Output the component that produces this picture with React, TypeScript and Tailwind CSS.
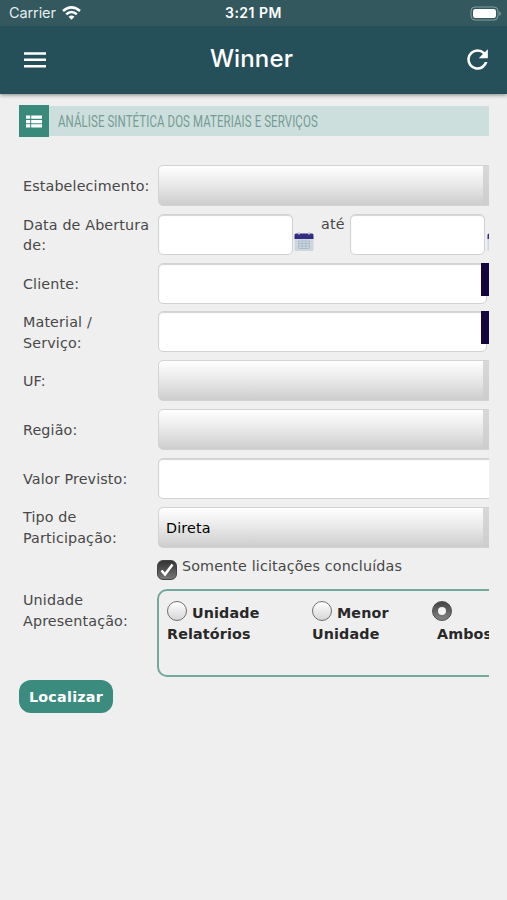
import React from 'react';
import clsx from 'clsx';

interface FieldRowProps {
  label: string;
  children: React.ReactNode;
}

function FieldRow({ label, children }: FieldRowProps) {
  return (
    <div className="flex h-[48.8px] shrink-0">
      <div className="flex h-[42px] w-[139px] shrink-0 items-center whitespace-pre-line pl-1 pt-[1px]">
        {label}
      </div>
      {children}
    </div>
  );
}

function SelectField({ value = '' }: { value?: string }) {
  return (
    <div className="flex h-[41px] w-[340px] shrink-0 rounded-[5px] border border-[#d3d3d3] bg-linear-to-b from-white via-[#e8e8e8] to-[#cdcdcd]">
      <div className="flex w-[324px] items-center pl-[7px] pt-[2px] text-black">{value}</div>
      <div className="grow bg-linear-to-b from-[#d8d8d8] to-[#cdcdcd]" />
    </div>
  );
}

function TextField({ className }: { className?: string }) {
  return (
    <div
      className={clsx(
        'h-[41px] shrink-0 rounded-[5px] border border-[#d2d2d2] bg-white shadow-[inset_0_1px_1px_#d4d4d4]',
        className
      )}
    />
  );
}

function CalendarIcon() {
  return (
    <svg width="20" height="20" viewBox="0 0 20 20" className="mt-[18px] shrink-0">
      <rect x="0.5" y="4" width="19" height="15" rx="1.5" fill="#ccd7df" />
      <path d="M0.5 7V3Q0.5 1.5 2 1.5H18Q19.5 1.5 19.5 3V7Z" fill="#302f80" />
      <path d="M5 0.5V2.6M15 0.5V2.6" stroke="#b9bed6" strokeWidth="2" />
      <path
        d="M4.5 9H15.5M4.5 11.5H15.5M4.5 14H15.5M4.5 16.5H15.5M4.5 9V16.5M8.2 9V16.5M11.8 9V16.5M15.5 9V16.5"
        stroke="#a5b8c5"
        strokeWidth="0.8"
      />
    </svg>
  );
}

// Text input with the lookup button overlapping its right edge
function SearchField() {
  return (
    <div className="relative flex shrink-0">
      <TextField className="w-[329px]" />
      <div className="absolute left-[323px] top-0 flex h-[33px] w-8 items-center justify-center bg-[#140541]">
        <svg width="18" height="18" viewBox="0 0 18 18" fill="none" stroke="#fff" strokeWidth="2">
          <circle cx="7" cy="7" r="5" />
          <path d="M11 11L16 16" />
        </svg>
      </div>
    </div>
  );
}

function Radio({ checked = false }: { checked?: boolean }) {
  return (
    <span
      className={clsx(
        'flex size-5 shrink-0 items-center justify-center rounded-full border-[1.5px]',
        checked
          ? 'border-[#4b4b4b] bg-linear-to-b from-[#444] to-[#858585]'
          : 'border-[#707070] bg-linear-to-b from-white to-[#d6d6d6]'
      )}
    >
      {checked && <span className="size-2 rounded-full bg-[#f3f3f3]" />}
    </span>
  );
}

function StatusBar() {
  return (
    <div className="grid h-[26px] grid-cols-3 items-center bg-[#33595e] pl-[9px] pr-[6px] pt-[1px] text-[14.5px] text-[#e4eeee]">
      <div className="flex items-center gap-[6px]">
        <span className="tracking-[-0.1px]">Carrier</span>
        <svg width="19" height="14" viewBox="0 0 19 14" fill="none" stroke="#fff" strokeWidth="2.5">
          <path d="M1 5Q9.5 -2.2 18 5" />
          <path d="M4.2 8.3Q9.5 3.8 14.8 8.3" />
          <path d="M9.5 13.7L6.5 10.7Q9.5 8.2 12.5 10.7Z" fill="#fff" stroke="none" />
        </svg>
      </div>
      <div className="pr-[3px] text-center text-[14px] font-semibold tracking-[0.5px] text-white">3:21 PM</div>
      <svg width="31" height="15" viewBox="0 0 31 15" className="justify-self-end">
        <rect x="1" y="1" width="27" height="13" rx="4" fill="none" stroke="#879fa1" />
        <rect x="3" y="3" width="23" height="9" rx="2.3" fill="#fff" />
        <path d="M29.3 5V10Q30.8 9 30.8 7.5T29.3 5Z" fill="#879fa1" />
      </svg>
    </div>
  );
}

export default function App() {
  return (
    <div className="flex h-[900px] w-[507px] flex-col overflow-hidden bg-[#efefef] font-['DejaVu_Sans',sans-serif] text-[14.3px] leading-[20.7px] tracking-[0.14px] text-[#484848]">
      <header className="h-[94px] shrink-0 bg-[#265059] font-['Inter',sans-serif] shadow-[0_1px_4px_rgba(0,0,0,0.45)]">
        <StatusBar />
        <div className="flex h-[67px] items-center justify-between px-6">
          <svg width="22" height="16" viewBox="0 0 22 16" fill="#fff">
            <path d="M0 0.3H22V2.8H0ZM0 6.6H22V9.1H0ZM0 12.9H22V15.4H0Z" />
          </svg>
          <h1 className="mr-[5px] text-[24px] font-medium text-white">Winner</h1>
          <svg width="31" height="31" viewBox="0 0 24 24" fill="#fff" className="-mr-[10px]">
            <path d="M17.65 6.35A7.96 7.96 0 0 0 12 4a8 8 0 1 0 7.73 10h-2.08A6 6 0 1 1 12 6c1.66 0 3.14.69 4.22 1.78L13 11h7V4z" />
          </svg>
        </div>
      </header>

      <main className="ml-[19px] mt-[11px] w-[470px] overflow-hidden">
        <div className="flex h-8 items-center">
          <div className="flex h-8 w-[30px] shrink-0 items-center justify-center bg-[#3a8a7c]">
            <svg width="16" height="13" viewBox="0 0 16 13" fill="#fff">
              <path d="M0 0.5H4.2V3.8H0ZM5.2 0.5H16V3.8H5.2ZM0 4.9H4.2V8.2H0ZM5.2 4.9H16V8.2H5.2ZM0 9.3H4.2V12.6H0ZM5.2 9.3H16V12.6H5.2Z" />
            </svg>
          </div>
          <div className="flex h-[30px] grow items-center bg-[#cddfdc] pl-[9px] pt-[1px]">
            <span className="inline-block origin-left scale-x-[0.667] whitespace-nowrap font-['Roboto',sans-serif] text-[17.2px] text-[#759c94]">
              ANÁLISE SINTÉTICA DOS MATERIAIS E SERVIÇOS
            </span>
          </div>
        </div>

        <div className="mt-7 flex flex-col">
          <FieldRow label="Estabelecimento:">
            <SelectField />
          </FieldRow>
          <FieldRow label={'Data de Abertura\nde:'}>
            <TextField className="w-[135px]" />
            <div className="ml-[1px] flex shrink-0">
              <CalendarIcon />
            </div>
            <span className="ml-[7px] w-[29px] shrink-0">até</span>
            <TextField className="w-[135px]" />
            <div className="ml-[2px] flex shrink-0">
              <CalendarIcon />
            </div>
          </FieldRow>
          <FieldRow label="Cliente:">
            <SearchField />
          </FieldRow>
          <FieldRow label={'Material /\nServiço:'}>
            <SearchField />
          </FieldRow>
          <FieldRow label="UF:">
            <SelectField />
          </FieldRow>
          <FieldRow label="Região:">
            <SelectField />
          </FieldRow>
          <FieldRow label="Valor Previsto:">
            <TextField className="w-[345px]" />
          </FieldRow>
          <FieldRow label={'Tipo de\nParticipação:'}>
            <SelectField value="Direta" />
          </FieldRow>
        </div>

        <div className="ml-[138px] flex h-[34px]">
          <span className="mt-[5px] flex size-5 items-center justify-center rounded-[6px] border border-[#444] bg-linear-to-b from-[#333] to-[#777]">
            <svg width="16" height="16" viewBox="0 0 16 16" fill="none" stroke="#fff" strokeWidth="2.6">
              <path d="M2.5 8.5L6 12.5L13.5 2.5" />
            </svg>
          </span>
          <span className="ml-[5px] pt-[1px]">Somente licitações concluídas</span>
        </div>

        <div className="flex">
          <div className="w-[138px] shrink-0 pl-1 pt-[1px]">
            Unidade
            <br />
            Apresentação:
          </div>
          <div className="flex h-[88px] w-[360px] shrink-0 rounded-[10px] border-2 border-[#72a99d] pl-[8px] pt-[10px] font-bold text-[#282828]">
            <div className="w-[145px] shrink-0">
              <div className="flex h-[21px] gap-[5px]">
                <Radio />
                <span className="pt-[2px]">Unidade</span>
              </div>
              <div className="pt-[2px]">Relatórios</div>
            </div>
            <div className="w-[120px] shrink-0">
              <div className="flex h-[21px] gap-[5px]">
                <Radio />
                <span className="pt-[2px]">Menor</span>
              </div>
              <div className="pt-[2px]">Unidade</div>
            </div>
            <div className="shrink-0">
              <div className="h-[21px]">
                <Radio checked />
              </div>
              <div className="pl-[5px] pt-[2px]">Ambos</div>
            </div>
          </div>
        </div>

        <button className="mt-[3px] flex h-[33px] w-[94px] items-center justify-center rounded-[12px] bg-[#3b8b7e] font-bold tracking-[0.25px] text-white">
          Localizar
        </button>
      </main>
    </div>
  );
}
